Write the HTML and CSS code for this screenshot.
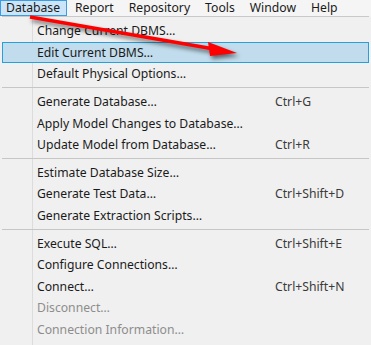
FILE: index.html
```html
<!DOCTYPE html>
<html>
<head>
    <title>Database Menu</title>
    <link rel="stylesheet" href="styles.css">
</head>
<body>
    <div class="menubar">
        <span class="menubar-item active">Database</span>
        <span class="menubar-item">Report</span>
        <span class="menubar-item">Repository</span>
        <span class="menubar-item">Tools</span>
        <span class="menubar-item">Window</span>
        <span class="menubar-item">Help</span>
    </div>

    <div class="dropdown">
        <div class="menu-row"><span>Change Current DBMS…</span><span class="shortcut"></span></div>
        <div class="menu-row hover"><span>Edit Current DBMS…</span><span class="shortcut"></span></div>
        <div class="menu-row"><span>Default Physical Options…</span><span class="shortcut"></span></div>
        <div class="menu-sep"></div>
        <div class="menu-row"><span>Generate Database…</span><span class="shortcut">Ctrl+G</span></div>
        <div class="menu-row"><span>Apply Model Changes to Database…</span><span class="shortcut"></span></div>
        <div class="menu-row"><span>Update Model from Database…</span><span class="shortcut">Ctrl+R</span></div>
        <div class="menu-sep"></div>
        <div class="menu-row"><span>Estimate Database Size…</span><span class="shortcut"></span></div>
        <div class="menu-row"><span>Generate Test Data…</span><span class="shortcut">Ctrl+Shift+D</span></div>
        <div class="menu-row"><span>Generate Extraction Scripts…</span><span class="shortcut"></span></div>
        <div class="menu-sep"></div>
        <div class="menu-row"><span>Execute SQL…</span><span class="shortcut">Ctrl+Shift+E</span></div>
        <div class="menu-row"><span>Configure Connections…</span><span class="shortcut"></span></div>
        <div class="menu-row"><span>Connect…</span><span class="shortcut">Ctrl+Shift+N</span></div>
        <div class="menu-row disabled"><span>Disconnect…</span><span class="shortcut"></span></div>
        <div class="menu-row disabled"><span>Connection Information…</span><span class="shortcut"></span></div>
    </div>

    <!-- annotation arrow drawn over the menu -->
    <svg class="arrow" width="371" height="345" viewBox="0 0 371 345">
        <line x1="30" y1="17" x2="214" y2="49" stroke="#ff0000" stroke-width="3.5"/>
        <polygon points="208,42 237,53 210,56" fill="#ff0000"/>
    </svg>
</body>
</html>
```

FILE: styles.css
```css
* {
    margin: 0;
    padding: 0;
    box-sizing: border-box;
}

body {
    font-family: 'Noto Sans', 'Open Sans', sans-serif;
    font-size: 12.2px;
    color: #1a1a1a;
    background: #f0f0f0;
    width: 371px;
    height: 345px;
    overflow: hidden;
    position: relative;
}

.menubar {
    display: flex;
    height: 16px;
    background: #f5f5f5;
}

.menubar-item {
    display: flex;
    align-items: center;
    padding: 0 7px;
    margin-right: 1px;
    line-height: 16px;
}

.menubar-item.active {
    background: #cce4f7;
    border: 1px solid #3d9be0;
    padding: 0 6px 0 5px;
}

.dropdown {
    border-top: 1px solid #c9c9c9;
    padding-top: 3px;
    margin: 0 2px;
    height: 329px;
    background: linear-gradient(to right, transparent 30px, #dcdcdc 30px, #dcdcdc 31px, transparent 31px);
}

.menu-row {
    display: grid;
    grid-template-columns: 238px 1fr;
    height: 21.6px;
    align-items: center;
    padding-left: 35px;
    white-space: nowrap;
}

.menu-row.hover {
    background: #c1dcec;
    border: 1px solid #26a0da;
    padding-left: 34px;
}

.menu-row.disabled {
    color: #8d8d8d;
}

.shortcut {
    color: #3a3a3a;
}

.menu-sep {
    height: 6px;
    display: flex;
    align-items: center;
}

.menu-sep::before {
    content: "";
    display: block;
    width: 100%;
    height: 1px;
    background: #c6c6c6;
}

.arrow {
    position: absolute;
    left: 0;
    top: 0;
    filter: drop-shadow(2px 3px 2px rgba(0, 0, 0, 0.55));
}
```
